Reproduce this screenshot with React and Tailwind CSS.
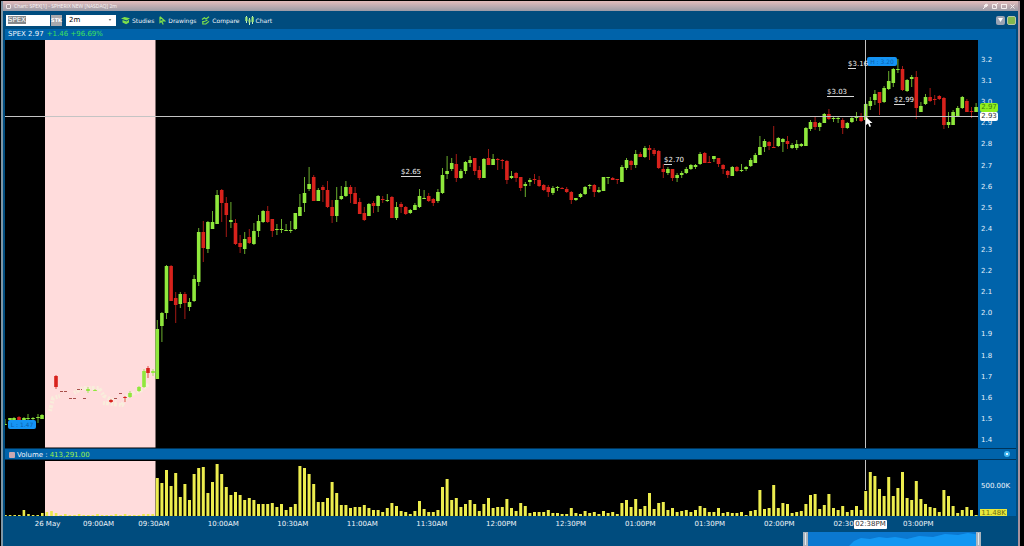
import React, { useState } from 'react';

// plot areas use the same x scale: 5 -> 978
const LEFT = 5;
const WIDTH = 973;
const STEP = 4.6;
const FIRST_X = 157.3;

const barX = (i) => FIRST_X + i * STEP;

// [direction, high, body top, body bottom, low], one entry per 2 minute bar from 09:30
const candles = `
g 320 329 379 379,g 312 313 326 342,g 265 266 313 319,r 265 266 301 301,r 292 298 305 323,g 292 294 304 308,
r 292 294 303 319,g 298 302 307 311,g 275 279 301 302,g 228 232 282 286,r 221 232 248 262,g 221 222 249 253,
g 211 222 229 229,g 190 195 224 224,r 189 190 203 222,r 197 203 215 237,g 202 220 222 228,r 219 223 244 245,
r 235 243 247 253,g 232 239 249 254,r 229 237 243 244,g 223 231 244 245,g 215 221 231 237,g 210 211 222 223,
r 206 211 222 223,r 219 219 231 237,g 224 229 230 235,g 219 229 230 233,g 224 230 231 231,g 221 230 231 233,
g 213 213 229 230,g 194 207 216 216,g 177 193 203 212,g 167 184 189 191,r 175 177 201 201,g 188 190 201 201,
r 185 187 190 202,r 181 190 207 208,r 200 207 216 223,g 187 200 216 222,g 186 196 199 200,g 181 187 196 197,
r 185 187 194 203,r 187 193 204 204,r 198 202 214 214,r 207 213 220 221,g 203 204 216 216,r 201 203 206 213,
g 195 196 206 212,r 196 199 200 203,g 194 200 201 202,r 196 197 218 218,g 202 207 218 220,r 202 204 207 213,
r 206 207 214 215,g 209 210 213 214,g 203 205 210 210,g 189 196 207 208,g 190 198 199 199,r 193 196 201 202,
r 198 199 203 206,g 189 192 201 203,g 168 175 193 194,g 156 171 174 179,g 158 163 169 171,r 154 164 178 182,
g 169 171 178 179,g 161 162 171 174,g 156 160 163 167,r 158 158 171 175,r 166 170 178 180,g 158 159 178 178,
r 149 158 165 165,g 154 159 165 165,r 158 159 160 170,r 159 160 161 169,r 160 161 180 184,g 171 176 178 179,
r 172 173 178 182,r 177 177 188 191,g 182 184 186 197,g 178 180 182 186,r 174 179 180 184,r 176 180 186 187,
r 184 185 190 191,r 185 187 192 197,g 186 188 193 195,g 186 187 188 191,r 187 188 189 189,r 187 189 192 193,
r 191 192 200 204,g 198 198 200 201,g 193 194 197 198,g 186 187 194 195,g 184 185 186 189,r 184 185 192 197,
g 187 190 192 193,g 177 177 191 191,g 177 177 178 184,r 177 178 180 180,r 179 179 180 184,g 165 167 182 182,
g 158 160 168 170,r 160 161 165 170,g 150 154 165 168,r 152 154 157 157,g 146 148 157 158,r 145 148 150 160,
r 148 150 154 156,r 150 151 168 169,r 164 169 172 178,g 167 169 173 175,r 169 169 178 181,g 173 175 178 182,
g 171 173 175 178,g 167 169 173 174,g 164 165 169 170,g 164 165 167 169,g 152 154 164 165,r 152 153 163 163,
r 156 162 163 163,g 156 156 159 162,r 158 158 164 167,r 164 165 169 174,r 170 171 175 178,g 166 167 176 176,
r 166 167 171 172,g 164 170 171 172,g 166 167 169 171,g 158 160 166 167,g 153 155 163 163,g 136 147 155 155,
g 139 141 147 152,r 141 142 146 150,r 126 147 148 148,g 137 138 146 147,g 138 139 142 152,r 136 141 144 149,
g 143 145 148 149,g 140 144 148 150,g 143 144 146 147,g 127 128 146 146,g 120 122 129 131,r 116 122 127 130,
g 122 123 127 131,g 113 114 123 123,r 109 114 119 120,g 116 118 119 122,g 116 118 119 123,r 118 120 128 134,
g 122 123 128 129,g 117 118 122 123,g 112 116 118 121,r 113 116 121 122,g 103 104 120 121,g 97 101 106 110,
g 90 94 100 105,r 92 92 103 115,g 86 88 102 103,g 71 81 89 90,g 68 69 83 87,g 59 69 70 73,
r 66 69 90 91,g 79 80 91 92,g 75 77 79 87,r 71 77 108 119,g 102 106 112 112,g 94 97 104 105,
r 88 97 101 102,r 95 99 100 105,r 95 96 99 100,r 97 98 125 129,g 112 122 125 128,g 110 112 125 125,
g 106 108 117 117,g 96 97 108 109,r 99 101 112 112,r 107 111 112 118,g 103 107 112 112
`
  .trim()
  .split(',')
  .map((row) => {
    const [dir, ...values] = row.trim().split(' ');
    return [dir, ...values.map(Number)];
  });

// thin pre-market trading: [x, direction, high, body top, body bottom, low]
const preMarket = [
  [5, 'g', 419, 424, 425, 425],
  [10, 'g', 418, 418, 420, 420],
  [14, 'g', 417, 418, 421, 421],
  [19, 'r', 416, 417, 420, 420],
  [24, 'g', 417, 418, 420, 421],
  [28, 'g', 414, 418, 419, 420],
  [33, 'g', 417, 418, 419, 420],
  [38, 'g', 414, 417, 418, 423],
  [42, 'g', 414, 415, 419, 419],
  [56, 'r', 375, 376, 387, 389],
  [88, 'g', 387, 389, 391, 393],
  [95, 'g', 389, 390, 391, 391],
  [111, 'r', 399, 400, 402, 403],
  [125, 'r', 396, 397, 398, 402],
  [130, 'g', 391, 393, 397, 398],
  [139, 'g', 386, 387, 391, 392],
  [144, 'g', 369, 371, 387, 388],
  [148, 'r', 366, 368, 373, 378],
  [153, 'g', 369, 371, 373, 376],
];

const volumes = [
  38, 33, 46, 30, 43, 19, 32, 16, 42, 48, 49, 23, 34, 52, 42, 29, 21, 24, 21, 16, 18, 16, 12, 12, 12, 13, 9, 12, 6, 9,
  12, 50, 48, 42, 32, 14, 14, 18, 34, 23, 11, 11, 8, 9, 9, 11, 8, 6, 6, 4, 8, 13, 10, 5, 4, 2, 5, 15, 7, 4, 4, 6, 29,
  37, 16, 18, 9, 12, 16, 12, 5, 12, 18, 8, 9, 9, 17, 8, 5, 13, 10, 3, 4, 4, 4, 6, 3, 3, 2, 2, 8, 3, 2, 5, 3, 4, 2, 5,
  3, 4, 2, 13, 16, 9, 17, 7, 10, 23, 7, 13, 14, 6, 8, 4, 5, 6, 4, 6, 10, 8, 4, 4, 8, 3, 4, 3, 3, 4, 1, 5, 6, 26, 7, 8,
  31, 8, 13, 12, 3, 4, 5, 12, 21, 22, 7, 11, 22, 8, 6, 10, 4, 6, 10, 6, 25, 44, 40, 27, 20, 39, 20, 28, 44, 18, 16,
  35, 17, 12, 9, 8, 4, 26, 20, 10, 3, 6, 9, 6, 1,
];

const preVolumes = [1, 1, 1, 1, 6, 2, 1, 1, 3, 4, 5, 3, 1, 2, 1, 1, 2, 1, 1, 1, 2, 1, 1, 1, 2, 1, 2, 1, 1, 1, 2, 2, 2];

const prices = [
  '3.2', '3.1', '3.0', '2.9', '2.8', '2.7', '2.6', '2.5', '2.4', '2.3',
  '2.2', '2.1', '2.0', '1.9', '1.8', '1.7', '1.6', '1.5', '1.4',
];

const times = [
  '26 May', '09:00AM', '09:30AM', '10:00AM', '10:30AM', '11:00AM', '11:30AM', '12:00PM',
  '12:30PM', '01:00PM', '01:30PM', '02:00PM', '02:30PM', '03:00PM',
];

const notes = [
  { text: '$2.65', x: 401, y: 168, line: 20 },
  { text: '$2.70', x: 664, y: 156, line: 8 },
  { text: '$3.03', x: 827, y: 88, line: 27 },
  { text: '$3.16', x: 848, y: 60, line: 8 },
  { text: '$2.99', x: 894, y: 96, line: 11 },
];

const place = (x, y) => ({
  left: `${((x - LEFT) / WIDTH) * 100}%`,
  top: `${((y - 40) / 408) * 100}%`,
});

const Candle = ({ x, dir, high, top, bottom, low }) => {
  const color = dir === 'g' ? '#8fe83c' : '#d8221c';
  return (
    <g fill={color}>
      <rect x={x - 0.5} y={high} width="1" height={Math.max(low - high, 1)} opacity="0.75" />
      <rect x={x - 1.8} y={top} width="3.6" height={Math.max(bottom - top, 1)} />
    </g>
  );
};

const StudiesIcon = () => (
  <svg viewBox="0 0 9 9" className="size-[9px]" fill="#7ee04a">
    <path d="M0 2.6 3.5 1 9 2.2 5.6 4.4Z" />
    <path d="M1.5 4v2.6l3.6 1.6L8 6.6V3.8L5.6 5.4Z" />
  </svg>
);

const DrawingsIcon = () => (
  <svg viewBox="0 0 7 9" className="h-[9px] w-[7px]" fill="none" stroke="#7ee04a" strokeWidth="1.2">
    <path d="M1 .8v5.6l1.6-1.3L4.2 8.4M1 .8l4.6 4H3" />
  </svg>
);

const CompareIcon = () => (
  <svg viewBox="0 0 9 9" className="size-[9px]" fill="none" stroke="#7ee04a" strokeWidth="1.2">
    <path d="M1 3.6 3.4 1.800 5 3 8 .8M1.800 5v3h3L8 5.400M2 5.800l2.500-.8L6.500 4" />
  </svg>
);

const ChartIcon = () => (
  <svg viewBox="0 0 9 9" className="size-[9px]">
    <path d="M1.5 0v7M4.5 2v7M7.5 0v8" stroke="#c9f3b8" />
    <path d="M.3 1h2.200v4H.3ZM3.500 3.500h2v3h-2ZM6.500 1h2.200v5H6.500Z" fill="#9fe87c" />
  </svg>
);

const tools = [
  { name: 'Studies', icon: StudiesIcon },
  { name: 'Drawings', icon: DrawingsIcon },
  { name: 'Compare', icon: CompareIcon },
  { name: 'Chart', icon: ChartIcon },
];

const TitleBar = () => (
  <header className="flex h-[10px] items-center justify-between bg-linear-to-b from-[#e3bcbc] to-[#9b9ba6] pr-[3px] pl-[3px]">
    <h1 className="flex items-center gap-[3px] font-['Open_Sans',sans-serif] text-[5px] leading-[8px] text-[#f8f4f4]">
      <span className="size-[5px] rounded-[1px] border border-[#eee6e6] bg-[#a89ca0]" />
      Chart: SPEX[1] - SPHERIX NEW [NASDAQ] 2m
    </h1>
    <svg viewBox="0 0 34 8" className="h-[8px] w-[34px]" fill="none" stroke="#f5eeee">
      <path d="M2 7l2-2M3 4l2-2 2 1-2 2Z" fill="#f5eeee" />
      <path d="M11.500 2.500h4v4h-4ZM14 4l3-3M20.500 2.500h5v4h-5ZM20 2.500h6M29.500 2.500l4 4M33.500 2.500l-4 4" />
    </svg>
  </header>
);

const Toolbar = () => {
  const [symbol, setSymbol] = useState('SPEX');
  const [interval, setInterval] = useState('2m');

  return (
    <div className="flex h-[18px] items-center justify-between bg-[#004c7e] pr-[2px] pl-[3px]">
      <div className="flex items-center">
        <input
          aria-label="Symbol"
          value={symbol}
          onChange={(e) => setSymbol(e.target.value)}
          className="h-[11px] w-[44px] bg-white bg-linear-to-r from-[#85898c] to-[#85898c] bg-[length:18px_8px] bg-[position:2px_1px] bg-no-repeat pl-[2px] text-[7px] leading-[9px] text-white outline-none"
        />
        <button className="ml-[1px] h-[11px] w-[11px] bg-[#a9a9ad] text-center text-[5px] leading-[11px] font-bold text-white">
          STK
        </button>
        <div className="relative ml-[4px]">
          <select
            aria-label="Interval"
            value={interval}
            onChange={(e) => setInterval(e.target.value)}
            className="block h-[11px] w-[50px] appearance-none bg-white pl-[3px] text-[7px] leading-[11px] text-black"
          >
            <option>2m</option>
            <option>5m</option>
            <option>15m</option>
          </select>
          <svg viewBox="0 0 4 3" className="pointer-events-none absolute top-[4px] right-[4px] h-[2px] w-[4px]" fill="#777">
            <path d="M0 0h4L2 3Z" />
          </svg>
        </div>
        <nav className="ml-[5px] flex items-center gap-[5px]">
          {tools.map(({ name, icon: Icon }) => (
            <button key={name} className="flex items-center gap-[2px] text-[6px] leading-[9px] text-[#f0f6fb]">
              <Icon />
              {name}
            </button>
          ))}
        </nav>
      </div>
      <div className="flex gap-[2px]">
        <button aria-label="Menu" className="flex size-[9px] items-center justify-center rounded-[2px] bg-[#9aa3b3]">
          <svg viewBox="0 0 5 4" className="h-[4px] w-[5px]" fill="#fff">
            <path d="M0 0h5L2.500 4Z" />
          </svg>
        </button>
        <button aria-label="Link color" className="size-[9px] rounded-[2px] border border-[#b9c7a8] bg-[#82b84e]" />
      </div>
    </div>
  );
};

const PricePlot = () => (
  <div className="relative min-w-0 flex-1 bg-black">
    <svg viewBox="5 40 973 408" preserveAspectRatio="none" className="absolute inset-0 size-full">
      <rect x="45" y="40" width="110.500" height="407.500" fill="#ffdcdc" />
      <g fill="none" stroke="#f6f4dc" strokeDasharray="2 1 3 2" strokeWidth="4" opacity="0.7">
        <path d="M50 411 53 398 60 396M74 393 83 388 99 388 104 396 116 402M103 403 122 405 127 396 140 391 149 384" />
      </g>
      <path d="M60 391.500h7M69 398.500h7M77 389.500h5M83 398.500h3M114 398.500h3M119 393.500h4" stroke="#a8504c" strokeDasharray="3 1" />
      {preMarket.map(([x, dir, high, top, bottom, low]) => (
        <Candle key={x} x={x} dir={dir} high={high} top={top} bottom={bottom} low={low} />
      ))}
      {candles.map(([dir, high, top, bottom, low], i) => (
        <Candle key={i} x={barX(i)} dir={dir} high={high} top={top} bottom={bottom} low={low} />
      ))}
      {/* crosshair */}
      <path d="M5 116.500H978M865.500 40V448" stroke="#c4c4c4" fill="none" />
    </svg>
    <div
      className="absolute h-[9px] w-[30px] rounded-[2px] bg-[#1594f4] text-center text-[6px] leading-[9px] text-[#0b5fae]"
      style={place(867, 57)}
    >
      H : 3.20
    </div>
    <div
      className="absolute h-[9px] w-[28px] rounded-[2px] bg-[#1594f4] text-center text-[6px] leading-[9px] text-[#0b5fae]"
      style={place(8, 420)}
    >
      L : 1.47
    </div>
    {notes.map((note) => (
      <div key={note.text} className="absolute text-[7px] leading-[8px] text-[#f0f0f0]" style={place(note.x, note.y)}>
        {note.text}
        <div className="h-px bg-[#d8d8d8]" style={{ width: note.line }} />
      </div>
    ))}
    <svg viewBox="0 0 7 10" className="absolute h-[10px] w-[7px]" style={place(866, 117)} fill="#fff">
      <path d="M0 0v8l2-1.500L3.500 10 5 9.300 3.600 6H6.500Z" />
    </svg>
  </div>
);

const PriceAxis = () => (
  <div className="relative flex w-[38px] flex-col justify-between bg-[#0063aa] pt-[15px] pb-[3px] pl-[3px] text-[7px] leading-[10px] text-[#e4f0fa]">
    {prices.map((price) => (
      <span key={price}>{price}</span>
    ))}
    <div
      className="absolute left-[2px] h-[9px] w-[18px] rounded-[2px] bg-[#8ff01e] text-center leading-[9px] text-[#3f7d10]"
      style={{ top: place(0, 103).top }}
    >
      2.97
    </div>
    <div
      className="absolute left-[2px] h-[9px] w-[18px] rounded-[2px] bg-white text-center leading-[9px] text-[#333]"
      style={{ top: place(0, 112).top }}
    >
      2.93
    </div>
  </div>
);

const VolumePanel = () => (
  <section>
    <div className="flex h-[12px] items-end justify-between border-y border-[#003358] bg-[#0063aa] pr-[6px] pl-[4px] text-[7px] leading-[8px]">
      <h2 className="flex items-center gap-[2px] text-[#f0f6fb]">
        <span className="size-[6px] rounded-[1px] bg-[#c9a8b0]" />
        Volume : <span className="text-[#9df04a]">413,291.00</span>
      </h2>
      <button aria-label="Close volume" className="mb-[2px] size-[6px] rounded-full bg-[#3fb4ee]">
        <svg viewBox="0 0 6 6" className="size-[6px]" stroke="#e8f6ff">
          <path d="M2 2l2 2M4 2 2 4" />
        </svg>
      </button>
    </div>
    <div className="flex h-[56px] bg-[#0063aa]">
      <svg viewBox="5 460 973 56" preserveAspectRatio="none" className="h-full min-w-0 flex-1 bg-black">
        <rect x="45" y="461" width="110.500" height="55" fill="#ffdcdc" />
        {preVolumes.map((v, i) => (
          <rect key={i} x={barX(i - 33) - 1.3} y={516 - v} width="2.600" height={v} fill="#e8e84a" />
        ))}
        {volumes.map((v, i) => (
          <rect key={i} x={barX(i) - 1.5} y={516 - v} width="3" height={v} fill="#eded4e" />
        ))}
        <path d="M865.500 460V490" stroke="#c4c4c4" />
      </svg>
      <div className="flex w-[38px] flex-col justify-between pt-[21px] pl-[2px] text-[7px] leading-[10px] text-[#f0f6fb]">
        <span className="pl-[1px]">500.00K</span>
        <span className="h-[7px] w-[27px] bg-[#e8e83c] text-center leading-[8px] text-[#6b6b14]">11.48K</span>
      </div>
    </div>
  </section>
);

const TimeAxis = () => (
  <div className="relative mr-[38px] grid h-[15px] grid-cols-[61fr_41fr_repeat(12,69.4fr)_25fr] items-center pt-[2px] pl-[12px] text-center text-[7px] leading-[9px] text-[#f0f6fb]">
    {times.map((time) => (
      <span key={time}>{time}</span>
    ))}
    <span
      className="absolute top-[4px] h-[9px] w-[33px] rounded-[1px] bg-white text-center text-[#333]"
      style={{ left: place(854, 0).left }}
    >
      02:38PM
    </span>
  </div>
);

const Navigator = () => (
  <div className="flex h-[15px] justify-end pt-[1px] pr-[35px]">
    <svg viewBox="0 0 178 14" className="h-[14px] w-[178px]">
      <rect width="178" height="14" fill="#0b78d0" />
      <path d="M46 14 51 9 58 6 67 7 76 5 84 6 92 5 104 7 116 4 130 5 142 2 155 3 165 1 178 3V14Z" fill="#1297f2" />
      <rect width="5" height="14" fill="#a9b4be" />
      <rect x="173" width="5" height="14" fill="#a9b4be" />
      <path d="M2.500 1v12M175.500 1v12" stroke="#e4e8ec" />
    </svg>
  </div>
);

const App = () => {
  return (
    <div className="flex min-h-screen flex-col bg-black pt-[1px] pr-[4px] pl-[1px] font-['DejaVu_Sans',sans-serif]">
      <div className="flex flex-1 flex-col border-r-2 border-l-2 border-r-[#a8929c] border-l-[#8097a6] bg-[#004c7e]">
        <TitleBar />
        <Toolbar />
        <main className="flex flex-1 flex-col pr-[2px] pl-[2px]">
          <div className="flex h-[11px] items-center gap-[3px] bg-[#0063aa] pl-[3px] text-[7px] leading-[11px] text-[#f0f6fb]">
            <span>SPEX 2.97</span>
            <span className="text-[#3fe05a]">+1.46 +96.69%</span>
          </div>
          <div className="flex min-h-[240px] flex-1">
            <PricePlot />
            <PriceAxis />
          </div>
          <VolumePanel />
          <TimeAxis />
          <Navigator />
        </main>
      </div>
    </div>
  );
};

export default App;
